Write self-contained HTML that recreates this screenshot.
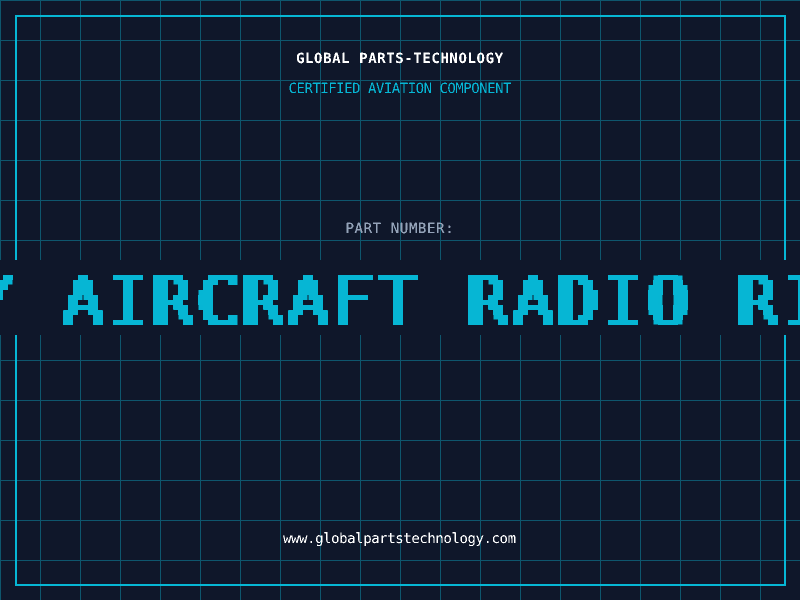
<!DOCTYPE html>
<html lang="en">
<head>
<meta charset="utf-8">
<title>Global Parts-Technology</title>
<style>
html,body{margin:0;padding:0;width:800px;height:600px;overflow:hidden;background:#0f172a}
svg{position:absolute;left:0;top:0;display:block}
text{font-family:"DejaVu Sans Mono","Liberation Mono",monospace;text-rendering:geometricPrecision}
</style>
</head>
<body>
<svg width="800" height="600" viewBox="0 0 800 600" xmlns="http://www.w3.org/2000/svg">
<defs>
<pattern id="g" width="40" height="40" patternUnits="userSpaceOnUse">
<path d="M0 0H40V1H1V40H0Z" fill="#0e566d"/>
</pattern>
<filter id="px" filterUnits="userSpaceOnUse" primitiveUnits="userSpaceOnUse" x="-40" y="260" width="880" height="75" color-interpolation-filters="sRGB">
<feMorphology in="SourceGraphic" operator="dilate" radius="2 0" result="d"/>
<feFlood x="5" y="262" width="1" height="1" flood-color="#fff"/>
<feComposite x="3" y="260" width="5" height="5"/>
<feTile result="t"/>
<feComposite in="d" in2="t" operator="in"/>
<feMorphology operator="dilate" radius="2"/>
<feComponentTransfer><feFuncA type="discrete" tableValues="0 1 1 1"/></feComponentTransfer>
</filter>
<filter id="th" filterUnits="userSpaceOnUse" x="0" y="0" width="800" height="600" color-interpolation-filters="sRGB">
<feComponentTransfer><feFuncA type="discrete" tableValues="0 0 1 1"/></feComponentTransfer>
</filter>
</defs>
<rect width="800" height="600" fill="#0f172a"/>
<rect width="800" height="600" fill="url(#g)"/>
<rect x="16" y="16" width="769" height="569" fill="none" stroke="#06b6d4" stroke-width="2"/>
<rect x="0" y="260" width="800" height="75" fill="#0f172a"/>
<g filter="url(#th)">
<text x="296" y="63" font-size="14" textLength="207" fill="#ffffff" font-weight="bold">GLOBAL PARTS-TECHNOLOGY</text>
<text x="288.5" y="93" font-size="14" textLength="223" fill="#06b6d4">CERTIFIED AVIATION COMPONENT</text>
<text x="345.5" y="233" font-size="14" textLength="108" fill="#94a3b8" stroke="#94a3b8" stroke-width=".15">PART NUMBER:</text>
<text x="283" y="543" font-size="14" textLength="233" fill="#ffffff">www.globalpartstechnology.com</text>
</g>
<text x="-27.6" y="325" font-size="68.5" letter-spacing="3.76" fill="#06b6d4" filter="url(#px)" xml:space="preserve">Y AIRCRAFT RADIO RIG</text>
</svg>
</body>
</html>
